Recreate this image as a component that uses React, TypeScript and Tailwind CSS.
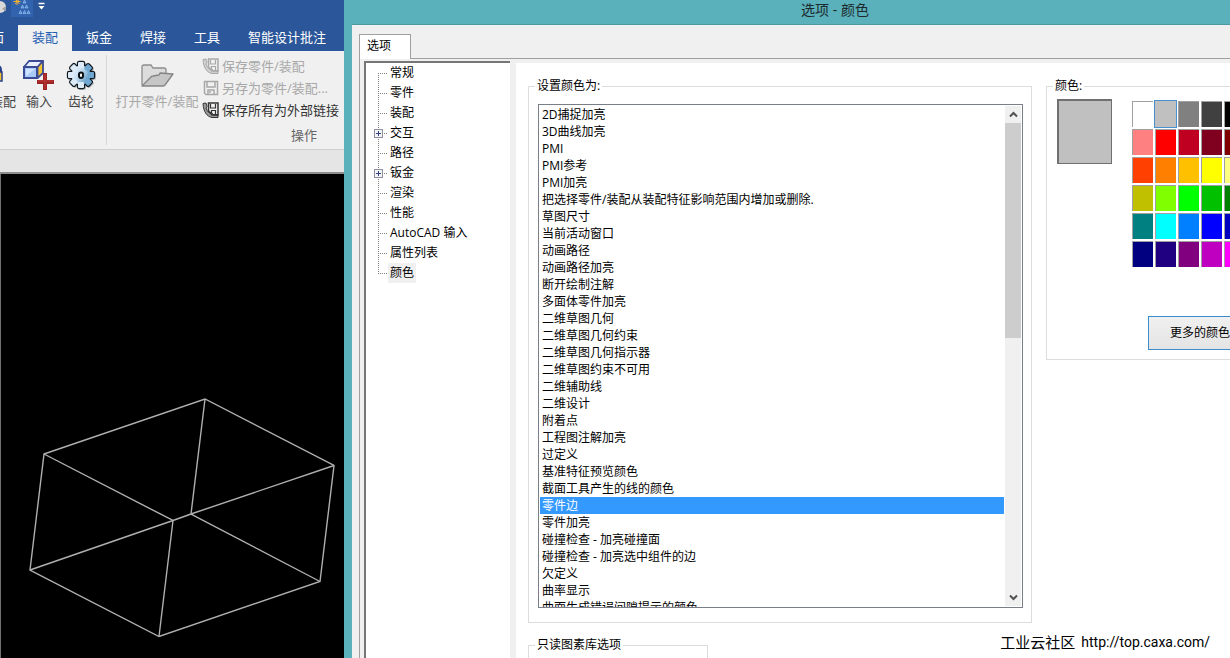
import { useState } from "react";

const ribbonTabs = ["装配", "钣金", "焊接", "工具", "智能设计批注"];

const treeItems: { label: string; expandable?: boolean }[] = [
  { label: "常规" },
  { label: "零件" },
  { label: "装配" },
  { label: "交互", expandable: true },
  { label: "路径" },
  { label: "钣金", expandable: true },
  { label: "渲染" },
  { label: "性能" },
  { label: "AutoCAD 输入" },
  { label: "属性列表" },
  { label: "颜色" },
];

const colorTargets = [
  "2D捕捉加亮",
  "3D曲线加亮",
  "PMI",
  "PMI参考",
  "PMI加亮",
  "把选择零件/装配从装配特征影响范围内增加或删除.",
  "草图尺寸",
  "当前活动窗口",
  "动画路径",
  "动画路径加亮",
  "断开绘制注解",
  "多面体零件加亮",
  "二维草图几何",
  "二维草图几何约束",
  "二维草图几何指示器",
  "二维草图约束不可用",
  "二维辅助线",
  "二维设计",
  "附着点",
  "工程图注解加亮",
  "过定义",
  "基准特征预览颜色",
  "截面工具产生的线的颜色",
  "零件边",
  "零件加亮",
  "碰撞检查 - 加亮碰撞面",
  "碰撞检查 - 加亮选中组件的边",
  "欠定义",
  "曲率显示",
  "曲面生成错误间隙提示的颜色",
];

const palette = [
  "#ffffff", "#c0c0c0", "#808080", "#404040", "#000000",
  "#ff8080", "#ff0000", "#c00020", "#800020", "#800000",
  "#ff4000", "#ff8000", "#ffc000", "#ffff00", "#ffff80",
  "#c0c000", "#80ff00", "#00ff00", "#00c000", "#008000",
  "#008080", "#00ffff", "#0080ff", "#0000ff", "#0000c0",
  "#000080", "#200080", "#800080", "#c000c0", "#ff00ff",
];

function ImportIcon() {
  return (
    <svg width="32" height="32" viewBox="0 0 32 32" aria-hidden="true">
      <path d="M1 8 6 2h14l-5 6z" fill="#e8f0ff" stroke="#3a4a94" strokeWidth="1.8" strokeLinejoin="round" />
      <path d="M14.500 8l5.500-6v12l-5.500 5z" fill="#f2c230" stroke="#3a4a94" strokeWidth="1.8" strokeLinejoin="round" />
      <rect x="1" y="8" width="13" height="11" fill="#a9c9f8" stroke="#3a4a94" strokeWidth="2" />
      <path d="M3 17V10h9z" fill="#cfe2ff" />
      <path d="M22 14v17M14 23h17" stroke="#9a2424" strokeWidth="4" />
      <path d="M22 15v15M15 22h15" stroke="#b83434" strokeWidth="1.500" />
    </svg>
  );
}

function GearIcon() {
  const angles = [0, 45, 90, 135, 180, 225, 270, 315];
  return (
    <svg width="32" height="32" viewBox="0 0 32 32" aria-hidden="true">
      <defs>
        <linearGradient id="gear" x1="5" y1="8" x2="27" y2="22" gradientUnits="userSpaceOnUse">
          <stop offset="0" stopColor="#f4faff" />
          <stop offset="0.45" stopColor="#c4dcf0" />
          <stop offset="1" stopColor="#3f83b8" />
        </linearGradient>
      </defs>
      <g stroke="#8d949a" strokeWidth="2" fill="#8d949a" opacity="0.6">
        {angles.map((a) => (
          <rect key={a} x="14" y="4" width="6" height="6" rx="1" transform={`rotate(${a} 17 17)`} />
        ))}
      </g>
      <g stroke="#10181f" strokeWidth="2.300" fill="#10181f">
        <circle cx="16" cy="16" r="9.500" />
        {angles.map((a) => (
          <rect key={a} x="13" y="3" width="6" height="6" rx="1" transform={`rotate(${a} 16 16)`} />
        ))}
      </g>
      <circle cx="16" cy="16" r="9.500" fill="url(#gear)" />
      {angles.map((a) => (
        <rect
          key={a}
          x="13"
          y="3"
          width="6"
          height="6"
          rx="1"
          fill={a > 0 && a < 180 ? "#6fa8d2" : "#dcebf7"}
          transform={`rotate(${a} 16 16)`}
        />
      ))}
      <rect x="14" y="13.500" width="4" height="5.500" rx="2" fill="#fff" stroke="#0a0f14" strokeWidth="2" />
    </svg>
  );
}

function FolderIcon() {
  return (
    <svg width="34" height="32" viewBox="0 0 34 32" aria-hidden="true">
      <path d="M2 26V8q0-2 2-2h7l2 3h11q2 0 2 2v4" fill="#dcdcdc" stroke="#8c8c8c" strokeWidth="1.3" />
      <path d="M2 27 11 18q1-1 2-1l6-1 1-2 13 1-8 11q-1 1-2 1z" fill="#c6c6c6" stroke="#858585" strokeWidth="1.3" strokeLinejoin="round" />
    </svg>
  );
}

function LockIcon() {
  return (
    <svg className="shrink-0" width="20" height="32" viewBox="0 0 20 32" aria-hidden="true">
      <path d="M10 15v-4q0-4 3.500-4t3.500 4v4" fill="none" stroke="#27408b" strokeWidth="2" />
      <rect x="6" y="13" width="12" height="9" fill="#f2c230" stroke="#27408b" strokeWidth="1.5" />
    </svg>
  );
}

function Floppy({ linked }: { linked: boolean }) {
  return (
    <svg width="18" height="18" viewBox="0 0 18 18" fill="none" stroke="currentColor" aria-hidden="true">
      {linked ? (
        <>
          <path d="M6.500 2h9.500v12h-6l-3.500-4z" strokeWidth="1.500" />
          <path d="M8.500 3v4h5V3M9.500 12V9.500h4v4" strokeWidth="1.200" />
          <path
            d="M1 2.500 4 2l1 3.500-1 1.500c.6 2 1.600 3.500 3 4.800l2-.6 2.500 2.300 4.500.5v2.500h-6C5 15.500 1.500 11 1 2.500z"
            fill="currentColor"
            fillOpacity="0.45"
            strokeWidth="1"
          />
        </>
      ) : (
        <>
          <path d="M2.500 2.500h13v13h-11.500l-1.500-1.500z" strokeWidth="1.500" />
          <path d="M5 3v5h8V3M6 15v-4h6v4M8 12v2" strokeWidth="1.500" />
        </>
      )}
    </svg>
  );
}

function Chevron({ up }: { up?: boolean }) {
  return (
    <svg width="9" height="7" viewBox="0 0 9 7" fill="none" stroke="#505050" strokeWidth="2" aria-hidden="true">
      <path d={up ? "M1 5.500 4.500 2 8 5.500" : "M1 1.500 4.500 5 8 1.500"} />
    </svg>
  );
}

function Branch({ first, last, expandable }: { first: boolean; last: boolean; expandable?: boolean }) {
  return (
    <svg className="shrink-0" width="22" height="20" viewBox="0 0 22 20" aria-hidden="true">
      <path
        d={`M12.500 ${first ? 10 : 0}V${last ? 10 : 20}M12 10.500H21`}
        stroke="#808080"
        strokeDasharray="1 1"
      />
      {expandable && (
        <>
          <rect x="8.500" y="6.500" width="8" height="8" fill="#f4f4f8" stroke="#8e8e9c" />
          <path d="M10 10.500h5M12.500 8v5" stroke="#33437a" />
        </>
      )}
    </svg>
  );
}

function ModelerWindow() {
  return (
    <section className="flex w-[344px] shrink-0 flex-col overflow-hidden bg-[#f0f0f0] text-[13px] leading-5">
      <header className="bg-[#2b579a] text-white">
        <div className="flex h-[25px] items-start">
          <svg width="50" height="20" viewBox="0 0 50 20" aria-hidden="true">
            <circle cx="0" cy="7" r="6" fill="#d8d8d8" />
            <path d="M2 9l4-3v5z" fill="#a0a0a0" />
            <rect x="11" y="0" width="22" height="17" fill="#3163ae" />
            <path d="M17 -2v7M13.500 1.500h7M15 -1l4.500 5M19.500-1 15 4" stroke="#f0b030" strokeWidth="1" />
            <g fill="#4d8fe0" stroke="#a5c8f0" strokeWidth="0.600">
              <path d="M24.500 0l1.500 3h-3zM22.500 5l1.500 3h-3zM26.500 5l1.500 3h-3zM20.500 10.500l1.500 3h-3zM24.500 10.500l1.500 3h-3zM28.500 10.500l1.500 3h-3z" />
            </g>
            <path d="M38.500 3.500h6" stroke="#fff" strokeWidth="1.500" />
            <path d="M38.500 6h6l-3 3.500z" fill="#fff" />
          </svg>
        </div>
        <nav className="flex h-[26px]">
          <button className="flex w-[18px] shrink-0 justify-end overflow-hidden pt-0.5 pr-3.5">面</button>
          {ribbonTabs.map((t, i) => (
            <button
              key={t}
              className={
                i === 0
                  ? "shrink-0 bg-[#f0f0f0] px-3.5 pb-0.5 text-[#1f5fb4]"
                  : "shrink-0 px-3.5 pb-0.5"
              }
            >
              {t}
            </button>
          ))}
        </nav>
      </header>

      <div className="flex h-[98px] shrink-0 text-[#444]">
        <button className="flex w-[18px] shrink-0 flex-col items-end overflow-hidden pt-2 pr-0.5">
          <span className="flex w-full justify-start">
            <span className="flex w-1 justify-end"><LockIcon /></span>
          </span>
          <span className="whitespace-nowrap">装配</span>
        </button>
        <button className="flex w-[42px] shrink-0 flex-col items-center pt-2">
          <ImportIcon />
          <span>输入</span>
        </button>
        <button className="mr-1 flex w-[42px] shrink-0 flex-col items-center pt-2">
          <GearIcon />
          <span>齿轮</span>
        </button>
        <div className="my-1 w-px bg-[#d8d8d8]" />
        <button className="ml-2 flex w-[84px] shrink-0 flex-col items-center pt-2 text-[#a8a8a8]" disabled>
          <FolderIcon />
          <span className="whitespace-nowrap">打开零件/装配</span>
        </button>
        <div className="ml-[3px] flex flex-1 flex-col pt-1">
          <button className="flex h-[22px] items-center gap-0.5 whitespace-nowrap text-[#a8a8a8]" disabled>
            <Floppy linked />
            保存零件/装配
          </button>
          <button className="flex h-[22px] items-center gap-0.5 whitespace-nowrap text-[#a8a8a8]" disabled>
            <Floppy linked={false} />
            另存为零件/装配...
          </button>
          <button className="flex h-[22px] items-center gap-0.5 whitespace-nowrap text-[#333]">
            <Floppy linked />
            保存所有为外部链接
          </button>
          <span className="mt-1 pr-[27px] text-right text-[#666]">操作</span>
        </div>
      </div>

      <div className="h-[25px] shrink-0 border-t border-b-2 border-t-[#d0d0d0] border-b-[#8c8c8c] bg-[#e5e5e5]" />
      <div className="flex min-h-0 flex-1 flex-col justify-end overflow-hidden border-l border-[#707070] bg-black">
        <svg className="shrink-0" width="343" height="268" viewBox="1 390 343 268" fill="none" stroke="#b0b0b0" strokeWidth="1.400" aria-label="线框模型">
          <path d="M44 454 205 399 334 465.500 320 581.500 159 636.500 30 570z" />
          <path d="M44 454 173 520.500 159 636.500M30 570 173 520.500 191 514 334 465.500M205 399 191 514 320 581.500" />
        </svg>
      </div>
    </section>
  );
}

function OptionsTree() {
  return (
    <ul className="w-[146px] shrink-0 border-t-2 border-l-2 border-[#767676] bg-white" role="tree">
      {treeItems.map((item, i) => (
        <li key={item.label} role="treeitem" className="flex h-5 items-center">
          <Branch first={i === 0} last={i === treeItems.length - 1} expandable={item.expandable} />
          <span
            className={
              i === treeItems.length - 1
                ? "bg-[#f0f0f0] px-0.5 leading-5"
                : "px-0.5 leading-5"
            }
          >
            {item.label}
          </span>
        </li>
      ))}
    </ul>
  );
}

function ColorList() {
  const [selected, setSelected] = useState(23);
  return (
    <div className="flex h-[504px] border border-[#7a7f87]">
      <ul className="min-w-0 flex-1 overflow-hidden p-px" role="listbox" aria-label="设置颜色为">
        {colorTargets.map((label, i) => (
          <li
            key={label}
            role="option"
            aria-selected={i === selected}
            onClick={() => setSelected(i)}
            className={
              i === selected
                ? "h-[17px] bg-[#3399ff] px-0.5 leading-[17px] whitespace-nowrap text-white"
                : "h-[17px] px-0.5 leading-[17px] whitespace-nowrap"
            }
          >
            {label}
          </li>
        ))}
      </ul>
      <div className="my-px mr-px flex w-4 shrink-0 flex-col bg-[#f0f0f0]">
        <button className="flex h-[17px] items-center justify-center" aria-label="向上滚动">
          <Chevron up />
        </button>
        <div className="h-[215px] bg-[#cdcdcd]" />
        <button className="mt-auto flex h-[17px] items-center justify-center" aria-label="向下滚动">
          <Chevron />
        </button>
      </div>
    </div>
  );
}

function ColorPicker() {
  const [current, setCurrent] = useState(1);
  return (
    <fieldset className="w-[184px] min-w-0 shrink-0 border border-r-0 border-[#dcdcdc] pb-[9px] pl-2.5">
      <legend className="-ml-1 px-0.5 leading-4">颜色:</legend>
      <div className="flex items-start gap-5 pt-[5px]">
        <div
          className="h-[65px] w-[55px] shrink-0 border border-t-2 border-l-2 border-[#707070]"
          style={{ backgroundColor: palette[current] }}
        />
        <div className="mt-0.5 grid shrink-0 grid-cols-[repeat(5,21px)] gap-0.5">
          {palette.map((c, i) => (
            <button
              key={c}
              aria-label={c}
              onClick={() => setCurrent(i)}
              className={
                i === current
                  ? "h-[26px] outline outline-[#4a90d0]"
                  : "h-[26px] border-t border-l border-[#a0a0a0]"
              }
              style={{ backgroundColor: c }}
            />
          ))}
        </div>
      </div>
      <button className="mt-[49px] ml-[91px] flex h-[34px] items-center border border-r-0 border-[#3c8ccc] bg-linear-to-b from-[#f0f0f0] to-[#e4e4e4] pl-[21px] whitespace-nowrap">
        更多的颜色
      </button>
    </fieldset>
  );
}

function OptionsDialog() {
  return (
    <section className="flex min-w-0 flex-1 flex-col overflow-hidden border-l-8 border-[#5ab0bb] text-xs text-black">
      <header className="h-6 shrink-0 bg-[#5ab0bb] pr-[70px]">
        <h1 className="mx-auto w-fit pl-[158px] text-sm leading-5 text-[#1c2a2c]">选项 - 颜色</h1>
      </header>
      <div className="flex min-h-0 flex-1 flex-col border-t border-[#4e98a2] bg-[#f0f0f0] pt-[9px] pl-[7px]">
        <div className="flex h-[25px] shrink-0">
          <button className="w-[52px] border-x border-t border-[#a0a0a0] bg-white pr-3 pb-0.5">选项</button>
          <div className="flex-1 border-b border-[#a0a0a0]" />
        </div>
        <div className="flex min-h-0 flex-1 border-l border-[#a0a0a0] pt-0.5 pl-1">
          <OptionsTree />
          <div className="mt-0.5 ml-1.5 flex min-w-0 flex-1 flex-col bg-white pt-[15px] pl-3">
            <div className="flex items-start gap-3.5">
              <fieldset className="min-w-0 flex-1 border border-[#dcdcdc] px-2 pb-3.5 pl-[9px]">
                <legend className="-ml-[3px] px-0.5 leading-4">设置颜色为:</legend>
                <div className="pt-2.5">
                  <ColorList />
                </div>
              </fieldset>
              <ColorPicker />
            </div>
            <fieldset className="mt-3.5 h-14 w-[180px] shrink-0 border border-b-0 border-[#dcdcdc] px-[9px]">
              <legend className="-ml-[3px] px-0.5 leading-4">只读图素库选项</legend>
            </fieldset>
          </div>
        </div>
      </div>
    </section>
  );
}

export default function App() {
  return (
    <main className="relative flex h-screen overflow-hidden font-['Open_Sans','Noto_Sans_CJK_SC',sans-serif]">
      <ModelerWindow />
      <OptionsDialog />
      <p className="absolute right-5 bottom-1.5 flex items-center gap-1.5 leading-5 text-black">
        <span className="text-[15px]">工业云社区</span>
        <a className="font-[Roboto] text-sm leading-5" href="http://top.caxa.com/">http://top.caxa.com/</a>
      </p>
    </main>
  );
}
